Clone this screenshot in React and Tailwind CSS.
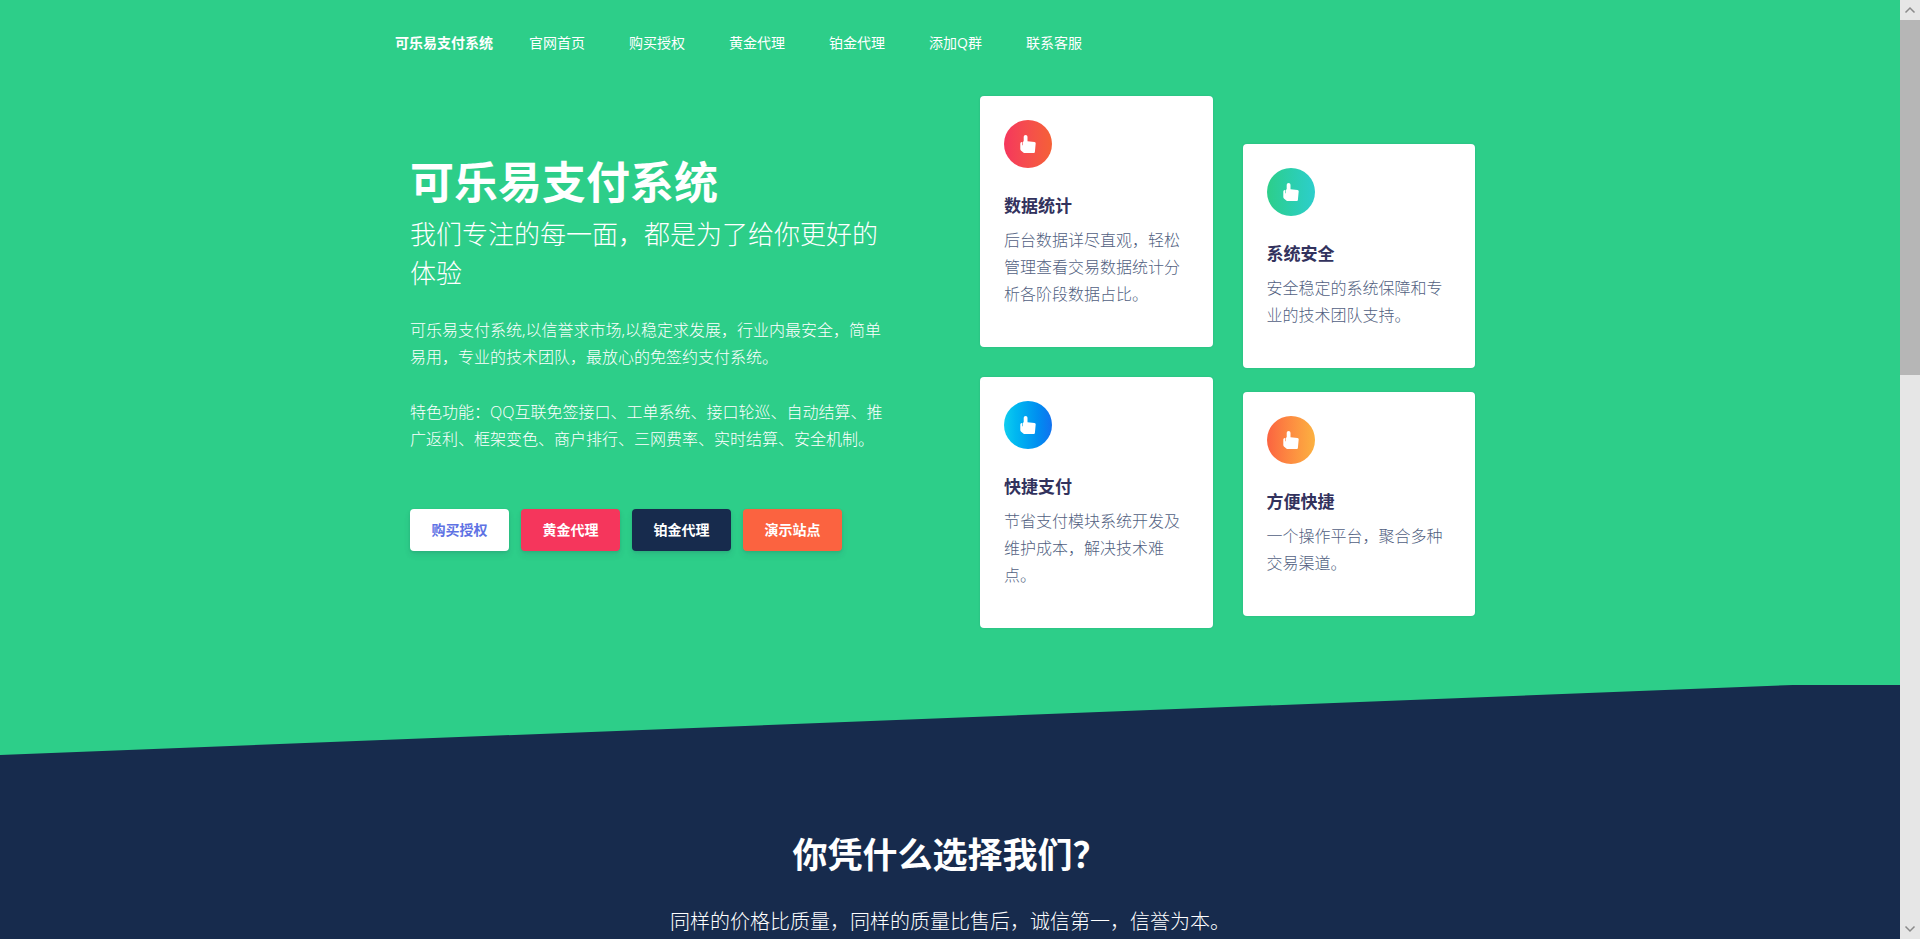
import React from "react";

const NAV = ["官网首页", "购买授权", "黄金代理", "铂金代理", "添加Q群", "联系客服"];

const ACTIONS = [
  { label: "购买授权", tone: "bg-white text-[#5e72e4]" },
  { label: "黄金代理", tone: "bg-[#f5365c] text-white" },
  { label: "铂金代理", tone: "bg-[#172b4d] text-white" },
  { label: "演示站点", tone: "bg-[#fb6340] text-white" },
];

const LEFT_CARDS = [
  {
    title: "数据统计",
    text: "后台数据详尽直观，轻松管理查看交易数据统计分析各阶段数据占比。",
    tone: "from-[#f5365c] to-[#f56036]",
  },
  {
    title: "快捷支付",
    text: "节省支付模块系统开发及维护成本，解决技术难点。",
    tone: "from-[#11cdef] to-[#1171ef]",
  },
];

const RIGHT_CARDS = [
  {
    title: "系统安全",
    text: "安全稳定的系统保障和专业的技术团队支持。",
    tone: "from-[#2dce89] to-[#2dcecc]",
  },
  {
    title: "方便快捷",
    text: "一个操作平台，聚合多种交易渠道。",
    tone: "from-[#fb6340] to-[#fbb140]",
  },
];

function HandIcon() {
  return (
    <svg viewBox="0 0 18 20" className="h-5 w-[18px]" fill="currentColor" aria-hidden="true">
      <path d="M4.700 2.800a1.900 1.900 0 0 1 3.800 0V7.200l7 .7a1.300 1.300 0 0 1 1.200 1.400l-.8 8.800a1.100 1.100 0 0 1-1.100 1H5.600a1.600 1.600 0 0 1-1-.4l-2.700-2.300a1.800 1.800 0 0 1-.6-1.300V9.400a1.500 1.500 0 0 1 1.500-1.500h.6v3.300h.6V7.800l.7-.5z" />
    </svg>
  );
}

function FeatureCard({ title, text, tone }) {
  return (
    <article className="rounded-[4px] bg-white p-6 shadow-[0_0_2px_rgba(50,50,93,0.15)]">
      <div className={`flex size-12 items-center justify-center rounded-full bg-linear-to-r text-white ${tone}`}>
        <HandIcon />
      </div>
      <h2 className="mt-[25px] text-[17px] leading-[26px] font-bold text-[#32325d]">{title}</h2>
      <p className="mt-2 mb-[15px] text-base leading-[27px] font-light text-[#525f7f]">{text}</p>
    </article>
  );
}

function Scrollbar() {
  return (
    <div className="flex w-5 shrink-0 flex-col bg-[#e6e6e6] text-[#8a8a8a]" aria-hidden="true">
      <div className="flex h-5 items-center justify-center">
        <svg viewBox="0 0 12 8" className="h-2 w-3" fill="none" stroke="currentColor" strokeWidth="1.5">
          <path d="M1.500 6.500 6 2l4.500 4.500" />
        </svg>
      </div>
      <div className="h-[355px] bg-[#b6b6b6]" />
      <div className="mt-auto flex h-5 items-center justify-center">
        <svg viewBox="0 0 12 8" className="h-2 w-3" fill="none" stroke="currentColor" strokeWidth="1.5">
          <path d="M1.500 1.500 6 6l4.500-4.500" />
        </svg>
      </div>
    </div>
  );
}

export default function App() {
  return (
    <div className="flex h-screen overflow-hidden font-['Open_Sans','Noto_Sans_CJK_SC',sans-serif]" lang="zh-CN">
      <main className="min-w-0 flex-1 overflow-hidden bg-[#172b4d] text-white">
        <section className="bg-[#2dce89]">
          <header className="mx-auto flex w-full max-w-[1140px] items-center px-[15px] pt-8">
            <a href="#home" className="text-sm leading-[22px] font-semibold">
              可乐易支付系统
            </a>
            <nav className="ml-9 flex gap-11">
              {NAV.map((item) => (
                <a key={item} href="#nav" className="text-sm leading-[22px]">
                  {item}
                </a>
              ))}
            </nav>
          </header>

          <div className="mx-auto flex w-full max-w-[1140px] justify-between pt-[42px] pr-[45px] pb-[57px] pl-[30px]">
            <div className="w-[480px] pt-[53px]">
              <h1 className="text-[44px] leading-[66px] font-bold">
                可乐易支付系统
                <span className="block text-[26px] leading-[39px] font-light">
                  我们专注的每一面，都是为了给你更好的体验
                </span>
              </h1>
              <p className="mt-6 text-base leading-[27px] font-light">
                可乐易支付系统,以信誉求市场,以稳定求发展，行业内最安全，简单易用，专业的技术团队，最放心的免签约支付系统。
              </p>
              <p className="mt-7 text-base leading-[27px] font-light">
                特色功能：QQ互联免签接口、工单系统、接口轮巡、自动结算、推广返利、框架变色、商户排行、三网费率、实时结算、安全机制。
              </p>
              <div className="mt-14 flex gap-3">
                {ACTIONS.map(({ label, tone }) => (
                  <button
                    key={label}
                    type="button"
                    className={`h-[42px] min-w-[99px] rounded-[4px] px-5 text-sm font-semibold shadow-[0_4px_6px_rgba(50,50,93,0.11),0_1px_3px_rgba(0,0,0,0.08)] ${tone}`}
                  >
                    {label}
                  </button>
                ))}
              </div>
            </div>

            <div className="grid w-[495px] grid-cols-2 items-start gap-[30px]">
              <div className="flex flex-col gap-[30px]">
                {LEFT_CARDS.map((card) => (
                  <FeatureCard key={card.title} {...card} />
                ))}
              </div>
              <div className="flex flex-col gap-6 pt-12">
                {RIGHT_CARDS.map((card) => (
                  <FeatureCard key={card.title} {...card} />
                ))}
              </div>
            </div>
          </div>

          <svg viewBox="0 0 1900 70" preserveAspectRatio="none" className="block h-[70px] w-full" aria-hidden="true">
            <path d="M0 70 1793 0H1900V70Z" fill="#172b4d" />
          </svg>
        </section>

        <section className="px-4 pt-[74px] text-center">
          <h2 className="text-[35px] leading-[52px] font-bold">你凭什么选择我们？</h2>
          <p className="mt-6 text-xl leading-[34px] font-light">
            同样的价格比质量，同样的质量比售后，诚信第一，信誉为本。
          </p>
        </section>
      </main>
      <Scrollbar />
    </div>
  );
}
